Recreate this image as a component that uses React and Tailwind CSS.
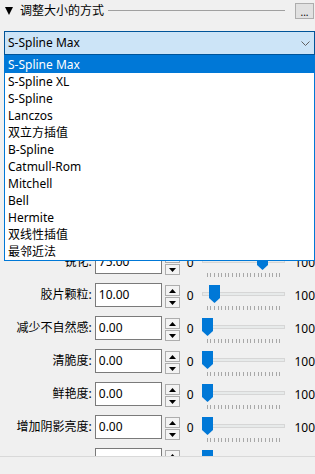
import React from "react";

const FONT = { fontFamily: '"Noto Sans", "Noto Sans CJK SC", sans-serif' };

const items = [
  "S-Spline Max",
  "S-Spline XL",
  "S-Spline",
  "Lanczos",
  "双立方插值",
  "B-Spline",
  "Catmull-Rom",
  "Mitchell",
  "Bell",
  "Hermite",
  "双线性插值",
  "最邻近法",
];

const rows = [
  { label: "锐化:", value: "75.00", pos: 75 },
  { label: "胶片颗粒:", value: "10.00", pos: 10 },
  { label: "减少不自然感:", value: "0.00", pos: 0 },
  { label: "清脆度:", value: "0.00", pos: 0 },
  { label: "鲜艳度:", value: "0.00", pos: 0 },
  { label: "增加阴影亮度:", value: "0.00", pos: 0 },
  { label: "", value: "", pos: 0, clipped: true },
];

function Spin() {
  return (
    <div className="flex flex-col gap-[1px] mt-[2px] ml-[3px]">
      <div className="w-[15px] h-[11px] border border-[#adadad] bg-[#f3f3f3] flex items-center justify-center">
        <svg width="7" height="4" viewBox="0 0 7 4">
          <path d="M3.5 0 L7 4 L0 4 Z" fill="#000" />
        </svg>
      </div>
      <div className="w-[15px] h-[11px] border border-[#adadad] bg-[#f3f3f3] flex items-center justify-center">
        <svg width="7" height="4" viewBox="0 0 7 4">
          <path d="M0 0 L7 0 L3.5 4 Z" fill="#000" />
        </svg>
      </div>
    </div>
  );
}

function Slider({ pos }) {
  const left = Math.round((pos / 100) * 73);
  return (
    <div className="relative w-[84px] h-[30px]">
      <div className="absolute left-0 right-0 top-[9px] h-[4px] bg-[#e7eaea] border border-[#d6d6d6]" />
      <svg
        className="absolute top-[2px]"
        style={{ left: left }}
        width="11"
        height="18"
        viewBox="0 0 11 18"
      >
        <path d="M0 0 H11 V13 L5.5 18 L0 13 Z" fill="#0078d7" />
      </svg>
      <div className="absolute top-[23px] left-[5px] w-[74px] h-[4px] flex justify-between">
        {Array.from({ length: 21 }).map((_, i) => (
          <div key={i} className="w-[1px] h-[4px] bg-[#a8a8a8]" />
        ))}
      </div>
    </div>
  );
}

function Row({ label, value, pos, clipped }) {
  return (
    <div className="flex items-start h-[33px]">
      <div className="w-[92px] text-right text-[12px] leading-[24px] text-black whitespace-nowrap">
        {label}
      </div>
      <div className="ml-[3px] w-[67px] h-[24px] border border-[#7a7a7a] bg-white pl-[3px] text-[12px] leading-[22px] text-black">
        {value}
      </div>
      <Spin />
      <div className="ml-[7px] w-[15px] text-[12px] leading-[26px] text-black">{clipped ? "" : "0"}</div>
      <Slider pos={pos} />
      <div className="ml-[9px] text-[12px] leading-[26px] text-black whitespace-nowrap">
        {clipped ? "" : "100"}
      </div>
    </div>
  );
}

export default function App() {
  return (
    <div className="w-[315px] h-[474px] bg-[#f0f0f0] overflow-hidden flex flex-col" style={FONT}>
      {/* header */}
      <div className="h-[31px] shrink-0 flex items-start pt-[3px]">
        <div className="flex items-center h-[16px] w-full">
          <svg className="ml-[5px] shrink-0" width="8" height="8" viewBox="0 0 8 8">
            <path d="M0 0 H8 L4 8 Z" fill="#000" />
          </svg>
          <span className="ml-[7px] text-[12px] leading-[16px] text-black whitespace-nowrap">
            调整大小的方式
          </span>
          <div className="flex-1 ml-[4px] mr-[10px] border-t border-[#a0a0a0] mb-[2px]" />
          <div className="w-[19px] h-[16px] shrink-0 border border-[#adadad] bg-[#e1e1e1] mr-[1px] flex items-end justify-center text-[10px] leading-[10px] text-black pb-[1px]">
            ...
          </div>
        </div>
      </div>

      {/* dropdown */}
      <div className="relative shrink-0 h-[24px] ml-[4px] w-[311px] z-10">
        <div className="h-[24px] border border-[#005499] bg-[#cce4f7] flex items-center pl-[3px] pr-[4px]">
          <span className="flex-1 text-[12px] leading-[22px] text-black">S-Spline Max</span>
          <svg width="9" height="5" viewBox="0 0 9 5">
            <path d="M0.5 0.5 L4.5 4.5 L8.5 0.5" fill="none" stroke="#606060" strokeWidth="1" />
          </svg>
        </div>
        <div className="absolute left-0 top-[24px] w-[311px] border border-[#0078d7] bg-white">
          {items.map((it, i) => (
            <div
              key={it}
              className={
                i === 0
                  ? "h-[17px] pl-[3px] text-[12px] leading-[17px] bg-[#0078d7] text-white"
                  : "h-[17px] pl-[3px] text-[12px] leading-[17px] text-black"
              }
            >
              {it}
            </div>
          ))}
        </div>
      </div>

      {/* scroll area */}
      <div className="h-[401px] shrink-0 overflow-hidden pt-[195px]">
        {rows.map((r, i) => (
          <Row key={i} {...r} />
        ))}
      </div>
      <div className="h-[1px] shrink-0 bg-[#d9d9d9]" />
      <div className="flex-1 bg-[#f0f0f0]" />
    </div>
  );
}
